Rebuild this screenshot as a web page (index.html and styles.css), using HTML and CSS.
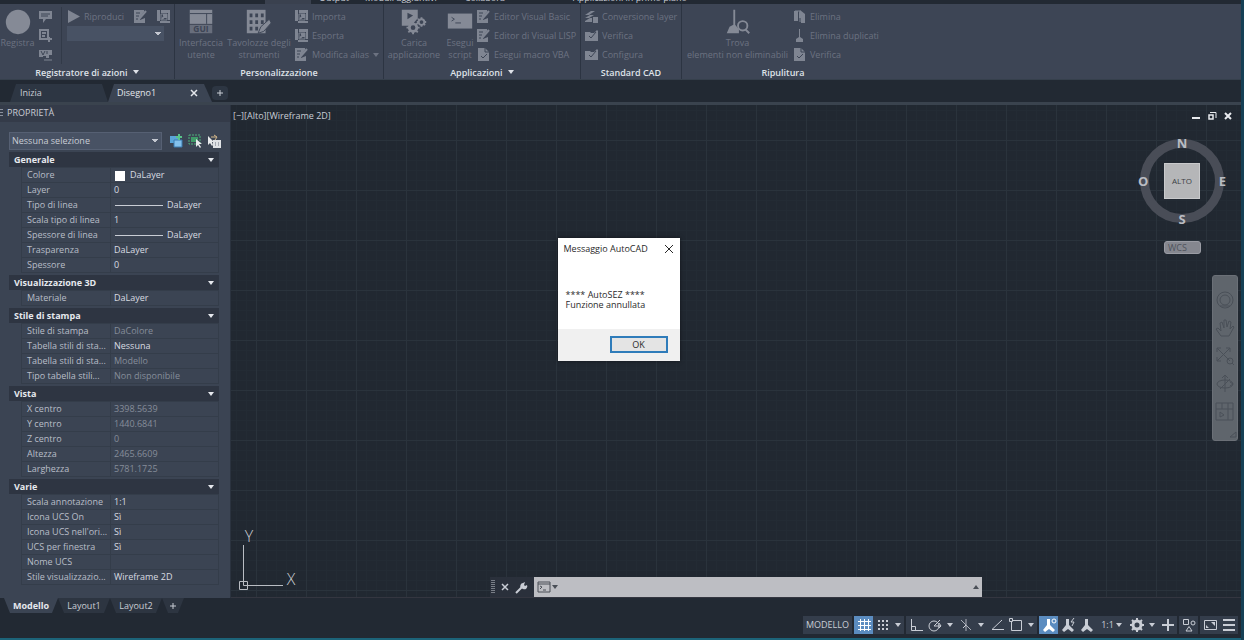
FILE: index.html
```
<!DOCTYPE html>
<html lang="it">
<head>
    <meta charset="UTF-8">
    <meta name="viewport" content="width=device-width, initial-scale=1.0">
    <title>AutoCAD - Disegno1</title>
    <link rel="stylesheet" href="styles.css">
</head>
<body>
    <svg class="sprite" aria-hidden="true">
        <symbol id="i-edit" viewBox="0 0 13 13">
            <path d="M0 0h10v2L6 7v3l5-2v5H0z" fill="currentColor"/>
            <path d="M2 3h4M2 6h3M2 9h2" stroke="#3d4555"/>
            <path d="M5 9l7-8" stroke="currentColor" stroke-width="2"/>
        </symbol>
        <symbol id="i-transfer" viewBox="0 0 13 13">
            <path d="M0 0h3v11H0zM4 0h9v3H4zM3 11h10v2H3zM11 3h2v7h-2z" fill="currentColor"/>
            <path d="M4 4h6v6H4z" fill="none" stroke="currentColor"/>
            <path d="M5 9l4-4M6 5h3v3" fill="none" stroke="currentColor" stroke-width="2"/>
        </symbol>
        <symbol id="i-folder" viewBox="0 0 13 13">
            <path d="M0 3h5l1 1h3l3-3 1 1v10H0z" fill="currentColor"/>
            <path d="M4 7l2 2 5-6" fill="none" stroke="#3d4555"/>
        </symbol>
        <symbol id="i-check" viewBox="0 0 13 13">
            <path d="M1 0h7l4 4v9H1z" fill="currentColor"/>
            <path d="M4 8l2 2 4-4M8 0v4h4" fill="none" stroke="#3d4555"/>
        </symbol>
        <symbol id="i-broom" viewBox="0 0 13 13">
            <path d="M6 0h1v8l3 2v3H3v-3l3-2z" fill="currentColor"/>
        </symbol>
        <symbol id="i-person" viewBox="0 0 16 16">
            <path d="M6 2h3v6l5 5-2 2-4-3-4 3-2-2 4-5z" fill="currentColor"/>
        </symbol>
        <symbol id="i-gear" viewBox="0 0 16 16">
            <circle cx="8" cy="8" r="4" fill="none" stroke="currentColor" stroke-width="3"/>
            <path d="M8 1v3M8 12v3M1 8h3M12 8h3M3 3l2 2M11 11l2 2M13 3l-2 2M5 11l-2 2" stroke="currentColor" stroke-width="2"/>
        </symbol>
    </svg>

    <nav class="menu-tabs">
        <a href="#" class="active">Gestione</a>
        <a href="#" class="output">Output</a>
        <a href="#">Moduli aggiuntivi</a>
        <a href="#">Collabora</a>
        <a href="#" class="last">Applicazioni in primo piano</a>
    </nav>

    <div class="ribbon">
        <section class="ribbon-panel">
            <div class="ribbon-body recorder">
                <button class="big record">
                    <svg viewBox="0 0 32 32"><circle cx="16" cy="16" r="13" fill="currentColor"/></svg>
                    <span>Registra</span>
                </button>
                <div class="small-col icons-only">
                    <button class="small" aria-label="Inserisci messaggio"><svg viewBox="0 0 13 13"><path d="M0 1h13v8H7l-3 4V9H0z" fill="currentColor"/><path d="M2 4h9M2 6h7" stroke="#3d4555"/></svg></button>
                    <button class="small" aria-label="Inserisci punto base"><svg viewBox="0 0 13 13"><path d="M1 1h8v9H1zM3 4h4M3 7h3M8 10h5M10 8v5" fill="none" stroke="currentColor" stroke-width="2"/></svg></button>
                    <button class="small" aria-label="Richiedi input"><svg viewBox="0 0 13 13"><path d="M0 2h13v5h-3v3H7V8H4v1H0z" fill="currentColor"/><path d="M2 3l2 4 2-4M8 3v3" fill="none" stroke="#3d4555"/><path d="M5 12h8" stroke="currentColor"/></svg></button>
                </div>
                <div class="playback">
                    <div class="play-row">
                        <button class="small play"><svg viewBox="0 0 13 13"><path d="M1 0l12 6.500-12 6.500z" fill="currentColor"/></svg>Riproduci</button>
                        <button class="small" aria-label="Preferenze"><svg><use href="#i-edit"/></svg></button>
                        <button class="small" aria-label="Gestisci macro"><svg><use href="#i-transfer"/></svg></button>
                    </div>
                    <select aria-label="Macro"><option></option></select>
                </div>
            </div>
            <h2>Registratore di azioni <i class="arrow"></i></h2>
        </section>

        <section class="ribbon-panel">
            <div class="ribbon-body">
                <button class="big interface">
                    <svg viewBox="0 0 32 32"><path d="M4 3h24v15H4z" fill="currentColor"/><path d="M4 7h24M22 7v11" stroke="#3d4555"/><path d="M4 19h24v9H4z" fill="currentColor" opacity=".6"/><text x="16" y="27" text-anchor="middle" class="gui">GUI</text></svg>
                    <span>Interfaccia<br>utente</span>
                </button>
                <button class="big palettes">
                    <svg viewBox="0 0 32 32"><path d="M3 3h20v25H3z" fill="currentColor"/><path d="M6 7h3v4H6zM12 7h3v4h-3zM18 7h3v4h-3zM6 14h3v4H6zM12 14h3v4h-3zM18 14h3v4h-3zM6 21h3v4H6zM12 21h3v4h-3z" fill="#3d4555"/><path d="M15 28l3-7 9-8 2 4-8 9z" fill="currentColor" stroke="#3d4555"/></svg>
                    <span>Tavolozze degli<br>strumenti</span>
                </button>
                <div class="small-col">
                    <button class="small"><svg><use href="#i-transfer"/></svg>Importa</button>
                    <button class="small"><svg><use href="#i-transfer"/></svg>Esporta</button>
                    <button class="small"><svg><use href="#i-edit"/></svg>Modifica alias <i class="arrow"></i></button>
                </div>
            </div>
            <h2>Personalizzazione</h2>
        </section>

        <section class="ribbon-panel">
            <div class="ribbon-body">
                <button class="big load">
                    <svg viewBox="0 0 32 32"><path d="M3 3h17v9l-7 8H3z" fill="currentColor"/><path d="M9 6v7l6-4z" fill="#3d4555"/><g fill="#3d4555" stroke="currentColor" stroke-width="3"><circle cx="15" cy="22" r="4"/><circle cx="24" cy="16" r="3" stroke-width="2"/></g><path d="M15 15v3M15 26v3M8 22h3M19 22h3M10 17l2 2M18 25l2 2M20 17l-2 2M12 25l-2 2M24 11v2M24 19v2M19 16h2M27 16h2M20 13l2 1M26 18l2 1" stroke="currentColor" stroke-width="2"/></svg>
                    <span>Carica<br>applicazione</span>
                </button>
                <button class="big script">
                    <svg viewBox="0 0 32 32"><path d="M3 7h26v16H3z" fill="currentColor"/><path d="M7 11l3 2-3 2M11 17h6" fill="none" stroke="#3d4555"/></svg>
                    <span>Esegui<br>script</span>
                </button>
                <div class="small-col tight">
                    <button class="small"><svg><use href="#i-edit"/></svg>Editor Visual Basic</button>
                    <button class="small"><svg><use href="#i-edit"/></svg>Editor di Visual LISP</button>
                    <button class="small"><svg><use href="#i-check"/></svg>Esegui macro VBA</button>
                </div>
            </div>
            <h2>Applicazioni <i class="arrow"></i></h2>
        </section>

        <section class="ribbon-panel">
            <div class="ribbon-body">
                <div class="small-col">
                    <button class="small"><svg viewBox="0 0 13 13"><path d="M0 5l6-4h4L4 5zM0 8l5-3h4L4 8zM0 11l5-3h2v4H0zM8 7h5v6H8z" fill="currentColor"/></svg>Conversione layer</button>
                    <button class="small"><svg><use href="#i-folder"/></svg>Verifica</button>
                    <button class="small"><svg><use href="#i-folder"/></svg>Configura</button>
                </div>
            </div>
            <h2>Standard CAD</h2>
        </section>

        <section class="ribbon-panel last">
            <div class="ribbon-body">
                <button class="big find">
                    <svg viewBox="0 0 32 32"><path d="M11 3h2v16l4 5v4H4l3-7 4-2z" fill="currentColor"/><circle cx="21" cy="20" r="5" fill="#3d4555" stroke="currentColor" stroke-width="2"/><path d="M24 24l4 4" stroke="currentColor" stroke-width="2"/></svg>
                    <span>Trova<br>elementi non eliminabili</span>
                </button>
                <div class="small-col">
                    <button class="small"><svg viewBox="0 0 13 13"><path d="M1 1h4v10H1zM6 3l1-3 5 4v9H8V8H6z" fill="currentColor"/><path d="M2 1h5v11" fill="none" stroke="currentColor"/></svg>Elimina</button>
                    <button class="small"><svg><use href="#i-broom"/></svg>Elimina duplicati</button>
                    <button class="small"><svg><use href="#i-check"/></svg>Verifica</button>
                </div>
            </div>
            <h2>Ripulitura</h2>
        </section>
    </div>

    <div class="doc-tabs">
        <button class="doc-tab">Inizia</button>
        <button class="doc-tab active">Disegno1<svg viewBox="0 0 8 8"><path d="M1 1l6 6M7 1L1 7" stroke="currentColor" stroke-width="1.500"/></svg></button>
        <button class="doc-add" aria-label="Nuovo disegno"><svg viewBox="0 0 8 8"><path d="M4 1v6M1 4h6" stroke="currentColor"/></svg></button>
    </div>

    <main>
        <aside class="properties">
            <h1>PROPRIETÀ</h1>
            <div class="selection">
                <select aria-label="Selezione"><option>Nessuna selezione</option></select>
                <button aria-label="Aggiungi alla selezione"><svg viewBox="0 0 14 14"><path d="M1 2h8v7H1z" fill="#5aa5d8"/><path d="M5 6h8v7H5z" fill="#83c1ec" stroke="#3b7bb0"/><path d="M10 0v6M7 3h6" stroke="#59c48a" stroke-width="2"/></svg></button>
                <button aria-label="Seleziona oggetti"><svg viewBox="0 0 14 14"><path d="M1 1h11v9H1z" fill="none" stroke="#4fb07c" stroke-dasharray="2 1"/><path d="M3 3h7v5H3z" fill="#3f9a68"/><path d="M8 5v8l2-2 2 3 1-1-2-3h3z" fill="#e8eaec"/></svg></button>
                <button aria-label="Selezione rapida"><svg viewBox="0 0 14 14"><path d="M1 2v9l2-2 2 3 1-1-1-3h2z" fill="#e8eaec"/><path d="M4 3h5M7 1l3 2-2 3" fill="none" stroke="#d6b98c"/><path d="M6 6h8v8H6z" fill="#dfe2e6"/><path d="M8 9h1M11 9h1M8 11h1M11 11h1" stroke="#68707e"/></svg></button>
            </div>

            <section class="group">
                <h3><button>Generale<i class="arrow"></i></button></h3>
                <table>
                    <tr><th>Colore</th><td><i class="swatch"></i>DaLayer</td></tr>
                    <tr><th>Layer</th><td>0</td></tr>
                    <tr><th>Tipo di linea</th><td><i class="line"></i>DaLayer</td></tr>
                    <tr><th>Scala tipo di linea</th><td>1</td></tr>
                    <tr><th>Spessore di linea</th><td><i class="line"></i>DaLayer</td></tr>
                    <tr><th>Trasparenza</th><td>DaLayer</td></tr>
                    <tr><th>Spessore</th><td>0</td></tr>
                </table>
            </section>
            <section class="group">
                <h3><button>Visualizzazione 3D<i class="arrow"></i></button></h3>
                <table>
                    <tr><th>Materiale</th><td>DaLayer</td></tr>
                </table>
            </section>
            <section class="group">
                <h3><button>Stile di stampa<i class="arrow"></i></button></h3>
                <table>
                    <tr><th>Stile di stampa</th><td class="off">DaColore</td></tr>
                    <tr><th>Tabella stili di sta...</th><td>Nessuna</td></tr>
                    <tr><th>Tabella stili di sta...</th><td class="off">Modello</td></tr>
                    <tr><th>Tipo tabella stili...</th><td class="off">Non disponibile</td></tr>
                </table>
            </section>
            <section class="group">
                <h3><button>Vista<i class="arrow"></i></button></h3>
                <table>
                    <tr><th>X centro</th><td class="off">3398.5639</td></tr>
                    <tr><th>Y centro</th><td class="off">1440.6841</td></tr>
                    <tr><th>Z centro</th><td class="off">0</td></tr>
                    <tr><th>Altezza</th><td class="off">2465.6609</td></tr>
                    <tr><th>Larghezza</th><td class="off">5781.1725</td></tr>
                </table>
            </section>
            <section class="group">
                <h3><button>Varie<i class="arrow"></i></button></h3>
                <table>
                    <tr><th>Scala annotazione</th><td>1:1</td></tr>
                    <tr><th>Icona UCS On</th><td>Sì</td></tr>
                    <tr><th>Icona UCS nell'ori...</th><td>Sì</td></tr>
                    <tr><th>UCS per finestra</th><td>Sì</td></tr>
                    <tr><th>Nome UCS</th><td></td></tr>
                    <tr><th>Stile visualizzazio...</th><td>Wireframe 2D</td></tr>
                </table>
            </section>
        </aside>

        <div class="canvas">
            <div class="view-label">[−][Alto][Wireframe 2D]</div>
            <div class="view-controls">
                <button aria-label="Riduci a icona"><svg viewBox="0 0 10 10"><path d="M1 7h8" stroke="currentColor" stroke-width="2"/></svg></button>
                <button aria-label="Ripristina"><svg viewBox="0 0 10 10"><path d="M2 4h4v4H2z" fill="none" stroke="currentColor" stroke-width="1.500"/><path d="M3 1.500h6V7" fill="none" stroke="currentColor"/></svg></button>
                <button aria-label="Chiudi"><svg viewBox="0 0 10 10"><path d="M2 2l6 6M8 2L2 8" stroke="currentColor" stroke-width="2"/></svg></button>
            </div>

            <div class="viewcube">
                <span class="north">N</span>
                <span class="west">O</span>
                <button class="face">ALTO</button>
                <span class="east">E</span>
                <span class="south">S</span>
            </div>
            <button class="wcs">WCS</button>

            <div class="navbar">
                <button aria-label="Ruota di navigazione"><svg viewBox="0 0 20 20"><circle cx="10" cy="10" r="8"/><circle cx="10" cy="10" r="5"/><path d="M5 16h10"/></svg></button>
                <button aria-label="Pan"><svg viewBox="0 0 20 20"><path d="M6 18l-5-7 2-1 3 3-1-8 2-1 2 6V2h2l1 7 2-6 2 1-1 7 3-3 1 1-5 9z"/></svg></button>
                <button aria-label="Zoom"><svg viewBox="0 0 20 20"><path d="M2 2l13 13M2 15L15 2M2 6V2h4M11 2h4v4M2 11v4h4"/><circle cx="15" cy="15" r="3"/><path d="M17 17l2 2"/></svg></button>
                <button aria-label="Orbita"><svg viewBox="0 0 20 20"><ellipse cx="10" cy="10" rx="8" ry="4"/><path d="M10 1v17M7 4l3-3 3 3M5 15l10-10M15 12l3-2-3-2"/></svg></button>
                <button aria-label="ShowMotion"><svg viewBox="0 0 20 20"><path d="M1 1h17v17H1zM1 7h17M7 1v6M13 1v6M13 7v11M5 10v5l4-2z"/></svg></button>
                <svg class="grip" viewBox="0 0 8 8"><path d="M1 7l6-5v5z"/></svg>
            </div>

            <svg class="ucs" viewBox="0 0 64 64">
                <path d="M5.500 17v36M10 57.500h35M1.500 53.500h8v8h-8zM5.500 53v4.500h4" fill="none" stroke="currentColor"/>
                <text x="11" y="14" text-anchor="middle">Y</text>
                <text x="53" y="57" text-anchor="middle">X</text>
            </svg>

            <div class="command">
                <button aria-label="Chiudi riga di comando"><svg viewBox="0 0 20 14"><path d="M2 0v14M4 0v14" stroke="currentColor" stroke-dasharray="1 1"/><path d="M12 4l6 6M18 4l-6 6" stroke="currentColor" stroke-width="1.500"/></svg></button>
                <button aria-label="Personalizza"><svg viewBox="0 0 20 14"><path d="M6 13l6-6" stroke="currentColor" stroke-width="2"/><path d="M11 8a3 3 0 0 1 2-5l2-1-1 3 1 1 2-1a3 3 0 0 1-4 4z" fill="currentColor"/></svg></button>
                <label class="command-line">
                    <svg viewBox="0 0 22 12"><path d="M1 1h12v10H1zM1 3h12" fill="none" stroke="#4a4f57"/><path d="M3 5l2 1-2 2M6 9h3" fill="none" stroke="#4a4f57"/><path d="M15 4h6l-3 4z" fill="#4a4f57"/></svg>
                    <input type="text" aria-label="Riga di comando">
                    <i class="arrow up"></i>
                </label>
            </div>
        </div>
    </main>

    <footer>
        <div class="layout-tabs">
            <button class="active">Modello</button>
            <button>Layout1</button>
            <button>Layout2</button>
            <button class="add" aria-label="Nuovo layout"><svg viewBox="0 0 8 8"><path d="M4 1v6M1 4h6" stroke="currentColor"/></svg></button>
        </div>
        <div class="status">
            <div class="status-group"><button class="model">MODELLO</button></div>
            <div class="status-group">
                <button class="on" aria-label="Griglia"><svg viewBox="0 0 16 16"><path d="M4.500 2v12M8.500 2v12M12.500 2v12M2 4.500h13M2 8.500h13M2 12.500h13" stroke="currentColor"/></svg></button>
                <button aria-label="Snap"><svg viewBox="0 0 16 16"><path d="M3 4h11M3 8h11M3 12h11" stroke="currentColor" stroke-width="2" stroke-dasharray="2 2"/></svg></button>
                <button class="drop" aria-label="Opzioni snap"><i class="arrow"></i></button>
            </div>
            <div class="status-group">
                <button aria-label="Orto"><svg viewBox="0 0 16 16"><path d="M3.500 2v11.500H15M3.500 9.500h4v4" fill="none" stroke="currentColor"/></svg></button>
                <button aria-label="Polare"><svg viewBox="0 0 16 16"><circle cx="7" cy="9" r="5" fill="none" stroke="currentColor"/><path d="M7 9l6-6M7 9h7M12 6l2 3-2 2" fill="none" stroke="currentColor"/></svg></button>
                <button class="drop" aria-label="Opzioni polare"><i class="arrow"></i></button>
                <button aria-label="Assonometria"><svg viewBox="0 0 16 16"><path d="M3 3l10 10M8 2v12" stroke="currentColor" opacity=".8"/><path d="M8 8l-3 3" stroke="currentColor"/></svg></button>
                <button class="drop" aria-label="Opzioni assonometria"><i class="arrow"></i></button>
                <button aria-label="Puntamento"><svg viewBox="0 0 16 16"><path d="M13 3L3 12.500h12" fill="none" stroke="currentColor"/></svg></button>
                <button aria-label="Snap ad oggetto"><svg viewBox="0 0 16 16"><path d="M3.500 3.500h10v10h-10z" fill="none" stroke="currentColor"/><path d="M1.500 1.500h3v3h-3z" fill="#3a4352" stroke="currentColor"/></svg></button>
                <button class="drop" aria-label="Opzioni snap ad oggetto"><i class="arrow"></i></button>
            </div>
            <div class="status-group">
                <button class="on" aria-label="Visibilità annotazione"><svg viewBox="0 0 16 16"><use href="#i-person"/><circle cx="13" cy="4" r="2" fill="none" stroke="currentColor"/></svg></button>
                <button aria-label="Scala automatica"><svg viewBox="0 0 16 16"><use href="#i-person"/><path d="M14 1l-3 4h3l-2 4" fill="none" stroke="currentColor"/></svg></button>
                <button aria-label="Annotazione"><svg viewBox="0 0 16 16"><use href="#i-person"/></svg></button>
                <button class="scale">1:1<i class="arrow"></i></button>
                <button aria-label="Area di lavoro"><svg><use href="#i-gear"/></svg></button>
                <button class="drop" aria-label="Opzioni area di lavoro"><i class="arrow"></i></button>
                <button aria-label="Monitor annotazione"><svg viewBox="0 0 16 16"><path d="M8 2v12M2 8h12" stroke="currentColor" stroke-width="2"/></svg></button>
            </div>
            <div class="status-group">
                <button aria-label="Isola oggetti"><svg viewBox="0 0 16 16"><path d="M2.500 2.500h5v5h-5zM8 9.500l3 4.500H5z" fill="none" stroke="currentColor"/><circle cx="12" cy="6" r="2" fill="none" stroke="currentColor"/></svg></button>
            </div>
            <div class="status-group">
                <button aria-label="Schermo intero"><svg viewBox="0 0 16 16"><path d="M2.500 3.500h12v9h-12z" fill="none" stroke="currentColor"/><path d="M9 5h4v4zM4 8v3h3z" fill="currentColor"/></svg></button>
                <button aria-label="Personalizzazione"><svg viewBox="0 0 16 16"><path d="M2 3h12M2 8h12M2 13h12" stroke="currentColor" stroke-width="2"/></svg></button>
            </div>
        </div>
    </footer>

    <div class="dialog" role="dialog" aria-labelledby="dialogTitle">
        <div class="dialog-title">
            <span id="dialogTitle">Messaggio AutoCAD</span>
            <button aria-label="Chiudi"><svg viewBox="0 0 10 10"><path d="M1 1l8 8M9 1L1 9" stroke="currentColor"/></svg></button>
        </div>
        <p>**** AutoSEZ ****<br>Funzione annullata</p>
        <div class="dialog-actions">
            <button class="ok">OK</button>
        </div>
    </div>
</body>
</html>
```
FILE: styles.css
```
* {
    box-sizing: border-box;
}

body {
    margin: 0;
    min-height: 100vh;
    display: flex;
    flex-direction: column;
    position: relative;
    background-color: #222933;
    border-right: 3px solid #164055;
    color: #c9cdd5;
    font-family: "Open Sans", "Segoe UI", sans-serif;
    font-size: 9px;
    line-height: 12px;
}

button,
select,
input {
    font: inherit;
    color: inherit;
    background: none;
    border: none;
    padding: 0;
    margin: 0;
}

h1,
h2,
h3,
p {
    margin: 0;
    font-size: 9px;
}

svg {
    display: block;
    flex: none;
}

.sprite {
    position: absolute;
    width: 0;
    height: 0;
}

.arrow {
    display: inline-block;
    flex: none;
    border: 3px solid transparent;
    border-top: 4px solid currentColor;
    border-bottom: none;
}

.arrow.up {
    border-top: none;
    border-bottom: 4px solid #4a4f57;
}

/* ribbon */
.menu-tabs {
    height: 4px;
    display: flex;
    align-items: flex-end;
    overflow: hidden;
    padding-left: 265px;
}

.menu-tabs a {
    color: inherit;
    text-decoration: none;
    padding: 0 8px 1px;
    margin-right: 12px;
    line-height: 10px;
    white-space: nowrap;
}

.menu-tabs .active {
    width: 46px;
    padding: 0 4px 2px;
    margin: 0;
    background-color: #3a414f;
}

.menu-tabs .output {
    margin-right: 0;
}

.menu-tabs .last {
    margin-left: 40px;
}

.ribbon {
    display: grid;
    grid-template-columns: 175px 209px 197px 101px 202px;
    height: 76px;
    background-color: #3d4555;
    border-bottom: 1px solid #36404c;
}

.ribbon-panel {
    display: flex;
    flex-direction: column;
    border-right: 1px solid #2c3442;
}

.ribbon-panel.last {
    border-right: none;
}

.ribbon-body {
    flex: 1;
    display: flex;
    gap: 4px;
    padding: 3px 0 0 4px;
    color: #6c7281;
    white-space: nowrap;
}

.ribbon-body.recorder {
    padding-left: 0;
    gap: 0;
}

.ribbon h2 {
    height: 15px;
    line-height: 18px;
    text-align: center;
    font-weight: 600;
    color: #dfe2e8;
}

.ribbon h2 .arrow {
    margin: 0 0 2px 3px;
}

.big {
    display: flex;
    flex-direction: column;
    align-items: center;
    color: inherit;
}

.big svg {
    width: 32px;
    height: 30px;
    color: #858a96;
}

.gui {
    font-size: 9px;
    font-weight: 700;
    fill: #3d4555;
}

.record {
    width: 35px;
}

.interface {
    width: 44px;
}

.palettes {
    width: 64px;
}

.load {
    width: 52px;
}

.script {
    width: 32px;
}

.find {
    width: 103px;
}

.small-col {
    display: flex;
    flex-direction: column;
}

.small-col.tight {
    margin-left: -3px;
}

.icons-only {
    padding: 0 9px 0 4px;
    border-right: 1px solid #323a48;
}

.small {
    display: flex;
    align-items: center;
    gap: 4px;
    height: 19px;
}

.small svg {
    width: 13px;
    height: 13px;
    color: #7f8592;
}

.playback {
    width: 108px;
    padding-left: 5px;
}

.play-row {
    display: flex;
    justify-content: space-between;
}

.playback select,
.selection select {
    appearance: none;
    background-color: #485264;
    background-image: linear-gradient(to bottom right, #c3c7d0 50%, transparent 50%), linear-gradient(to bottom left, #c3c7d0 50%, transparent 50%);
    background-size: 3px 4px;
    background-repeat: no-repeat;
    background-position: right 3px center, right 6px center;
}

.playback select {
    width: 97px;
    height: 15px;
}

/* document tabs */
.doc-tabs {
    display: flex;
    align-items: flex-end;
    height: 25px;
    padding-left: 10px;
    border-bottom: 3px solid #3a434e;
}

.doc-tab {
    display: flex;
    align-items: center;
    justify-content: space-between;
    width: 98px;
    height: 18px;
    padding: 0 10px;
    background-color: #2d3643;
    clip-path: polygon(6px 0, 92px 0, 100% 100%, 0 100%);
}

.doc-tab.active {
    width: 104px;
    padding: 0 14px 0 9px;
    background-color: #3b4453;
    color: #e3e6eb;
    clip-path: polygon(6px 0, 96px 0, 100% 100%, 0 100%);
}

.doc-tabs svg,
.layout-tabs svg {
    width: 8px;
    height: 8px;
}

.doc-add {
    display: flex;
    align-items: center;
    justify-content: center;
    width: 16px;
    height: 14px;
    margin-bottom: 2px;
    background-color: #2d3643;
    border-radius: 4px;
}

main {
    flex: 1;
    display: flex;
}

/* properties palette */
.properties {
    flex: none;
    width: 231px;
    padding-bottom: 11px;
    background-color: #3b4453;
    border-right: 1px solid #2b333f;
}

.properties h1 {
    display: flex;
    gap: 4px;
    height: 17px;
    line-height: 16px;
    font-weight: 400;
    background-color: #343b49;
}

.properties h1::before {
    content: "";
    width: 3px;
    height: 9px;
    margin-top: 4px;
    background-image: repeating-linear-gradient(#8b919d 0 1px, transparent 1px 3px);
}

.selection {
    display: flex;
    align-items: center;
    gap: 5px;
    padding: 10px 9px 2px;
}

.selection select {
    width: 154px;
    height: 18px;
    padding-left: 2px;
    border: 1px solid #566073;
    margin-right: 2px;
}

.selection svg {
    width: 14px;
    height: 14px;
}

.group {
    margin: 0 11px 2px 9px;
}

.group h3 button {
    display: flex;
    align-items: center;
    justify-content: space-between;
    width: 100%;
    height: 15px;
    padding: 0 5px;
    font-weight: 700;
    color: #e6e9ee;
    background-color: #2e3542;
}

.group table {
    width: 198px;
    margin-left: 12px;
    table-layout: fixed;
    border-collapse: collapse;
}

.group th,
.group td {
    height: 15px;
    padding: 0 0 0 5px;
    border: 1px solid #343d4a;
    font-weight: 400;
    text-align: left;
    white-space: nowrap;
}

.group th {
    width: 89px;
    color: #b9bec8;
}

.group td {
    padding-left: 3px;
    color: #d8dbe1;
}

.group td.off {
    color: #868d9a;
}

.swatch {
    display: inline-block;
    width: 10px;
    height: 10px;
    margin: 0 5px 0 1px;
    background-color: #fff;
    vertical-align: middle;
}

.line {
    display: inline-block;
    width: 48px;
    height: 1px;
    margin: 0 4px 0 1px;
    background-color: #c9cdd5;
    vertical-align: middle;
}

/* drawing area */
.canvas {
    flex: 1;
    position: relative;
    background-color: #212831;
    background-image:
        linear-gradient(#2a333c 1px, transparent 1px),
        linear-gradient(90deg, #2a333c 1px, transparent 1px),
        linear-gradient(#232b34 1px, transparent 1px),
        linear-gradient(90deg, #232b34 1px, transparent 1px);
    background-size: 50px 50px, 50px 50px, 10px 10px, 10px 10px;
    background-position: 25px 35px, 25px 35px, 5px 5px, 5px 5px;
    border-bottom: 1px solid #343640;
}

.view-label {
    position: absolute;
    top: 5px;
    left: 2px;
}

.view-controls {
    position: absolute;
    top: 6px;
    right: 8px;
    display: flex;
    gap: 6px;
    color: #e8eaee;
}

.view-controls svg {
    width: 10px;
    height: 10px;
}

.viewcube {
    position: absolute;
    top: 30px;
    right: 13px;
    width: 92px;
    height: 92px;
    padding: 2px;
    display: grid;
    grid-template: 1fr 36px 1fr / 1fr 36px 1fr;
    align-items: center;
    justify-items: center;
    font-size: 13px;
    font-weight: 700;
    color: #b9bcc2;
}

.viewcube::before {
    content: "";
    position: absolute;
    inset: 4px;
    border: 9px solid #494d57;
    border-radius: 50%;
}

.viewcube > * {
    position: relative;
}

.north {
    grid-area: 1 / 2;
    place-self: start center;
}

.west {
    grid-area: 2 / 1;
    place-self: center start;
}

.face {
    grid-area: 2 / 2;
    width: 36px;
    height: 36px;
    background-color: #b5b6b8;
    border: 1px solid #c9cacc;
    font-size: 8px;
    font-weight: 400;
    color: #3b3e44;
}

.east {
    grid-area: 2 / 3;
    place-self: center end;
}

.south {
    grid-area: 3 / 2;
    place-self: end center;
}

.wcs {
    position: absolute;
    top: 136px;
    right: 40px;
    width: 37px;
    height: 13px;
    padding-left: 3px;
    border: 1px solid #9a9ca4;
    border-radius: 3px;
    background-color: #85878f;
    color: #4f535c;
    line-height: 11px;
    text-align: left;
}

.navbar {
    position: absolute;
    top: 170px;
    right: 3px;
    width: 26px;
    height: 166px;
    display: flex;
    flex-direction: column;
    align-items: center;
    justify-content: space-between;
    padding: 14px 0 2px;
    border: 1px solid #6b7077;
    border-radius: 3px;
    background-color: #5f656c;
}

.navbar svg {
    width: 20px;
    height: 20px;
    fill: none;
    stroke: #4a5058;
}

.navbar .grip {
    width: 8px;
    height: 8px;
    align-self: flex-end;
}

.ucs {
    position: absolute;
    left: 7px;
    bottom: 5px;
    width: 64px;
    height: 64px;
    font-size: 16px;
    font-weight: 300;
    color: #b9bdc3;
    fill: #c9ccd1;
}

.command {
    position: absolute;
    left: 50%;
    bottom: 0;
    width: 492px;
    height: 20px;
    margin-left: -246px;
    display: flex;
    align-items: center;
    background-color: #2a303b;
}

.command > button svg {
    width: 20px;
    height: 14px;
}

.command > button + button {
    margin-right: 4px;
}

.command-line {
    flex: 1;
    align-self: stretch;
    display: flex;
    align-items: center;
    gap: 2px;
    padding: 0 3px;
    background-color: #bdbec3;
}

.command-line svg {
    width: 22px;
    height: 12px;
}

.command-line input {
    flex: 1;
    min-width: 0;
    color: #222933;
    outline: none;
}

/* bottom bars */
footer {
    border-bottom: 2px solid #1c6379;
    padding-bottom: 4px;
}

.layout-tabs {
    display: flex;
    height: 18px;
    padding-left: 4px;
}

.layout-tabs button {
    display: flex;
    align-items: center;
    justify-content: center;
    width: 52px;
    height: 15px;
    background-color: #2d3541;
    clip-path: polygon(0 0, 100% 0, calc(100% - 6px) 100%, 6px 100%);
}

.layout-tabs .active {
    width: 54px;
    background-color: #3b4453;
    color: #e6e9ee;
    font-weight: 700;
}

.layout-tabs .add {
    width: 22px;
}

.status {
    display: flex;
    justify-content: flex-end;
    gap: 2px;
    padding-right: 3px;
}

.status-group {
    display: flex;
    background-color: #343d4b;
}

.status button {
    display: flex;
    align-items: center;
    justify-content: center;
    width: 19px;
    height: 18px;
}

.status svg {
    width: 16px;
    height: 16px;
}

.status .model {
    width: 49px;
}

.status .drop {
    width: 12px;
}

.status .scale {
    width: 31px;
    gap: 2px;
}

.status .on {
    background-color: #5b8cc0;
    color: #fff;
}

/* message box */
.dialog {
    position: absolute;
    top: calc(50% - 82px);
    left: calc(50% - 63px);
    width: 122px;
    background-color: #fff;
    color: #2a2a2a;
    box-shadow: 0 0 4px rgba(0, 0, 0, 0.5);
}

.dialog-title {
    display: flex;
    align-items: center;
    justify-content: space-between;
    height: 22px;
    padding: 0 6px;
}

.dialog-title svg {
    width: 10px;
    height: 10px;
}

.dialog p {
    height: 69px;
    padding: 30px 8px 0;
    line-height: 10px;
    font-size: 9px;
}

.dialog-actions {
    display: flex;
    justify-content: flex-end;
    padding: 7px 12px 8px;
    background-color: #f0f0f0;
}

.ok {
    width: 58px;
    height: 17px;
    border: 2px solid #2f7cba;
    background-color: #e4e4e4;
}
```
